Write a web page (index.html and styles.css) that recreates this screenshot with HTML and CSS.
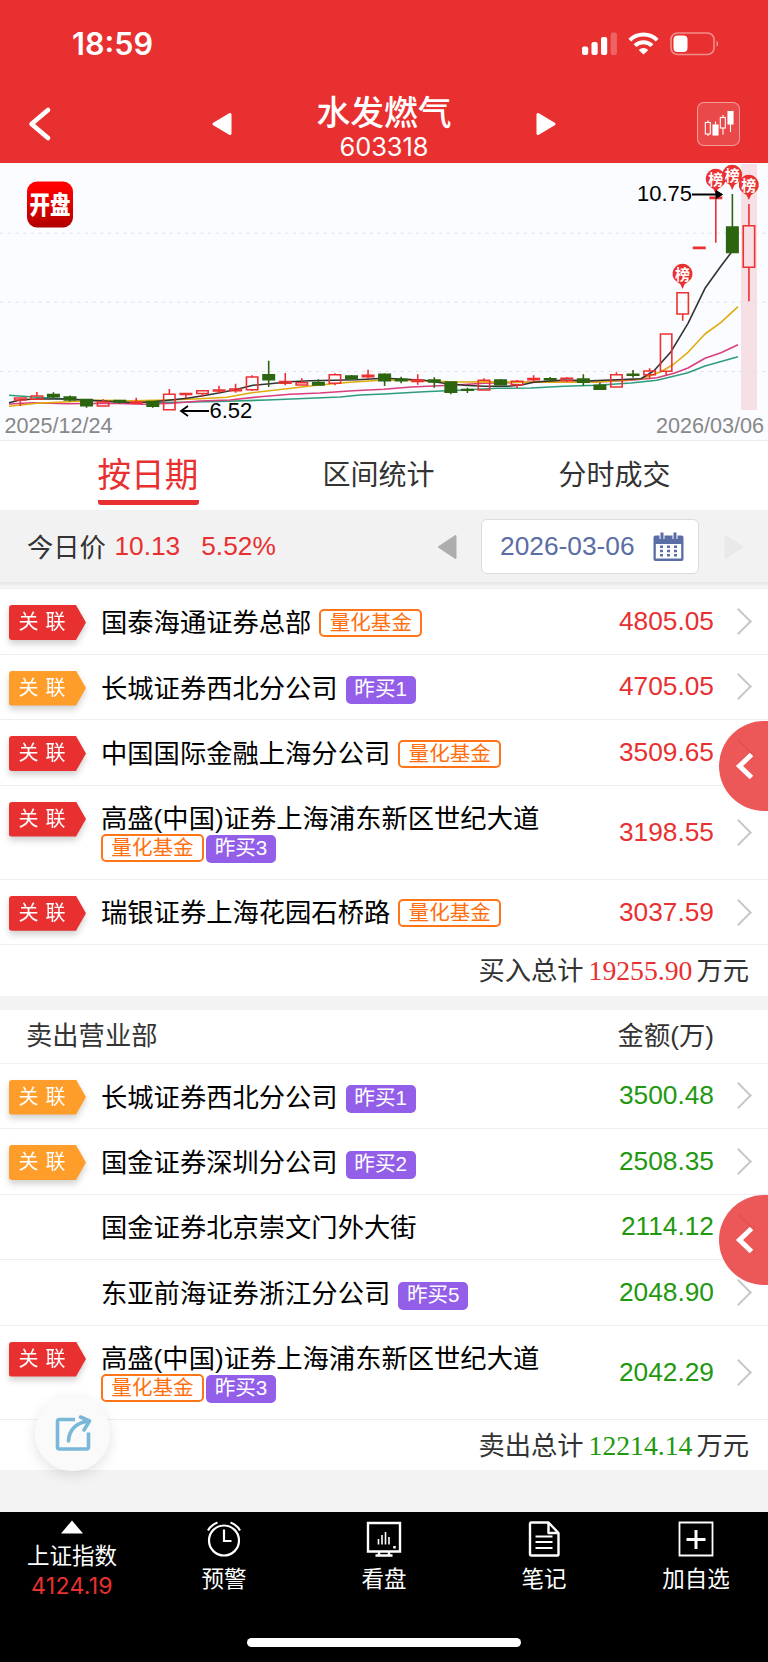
FILE: index.html
```
<!DOCTYPE html>
<html lang="zh-CN">
<head>
    <meta charset="UTF-8">
    <meta name="viewport" content="width=device-width, initial-scale=1.0">
    <title>水发燃气 603318</title>
    <link rel="stylesheet" href="styles.css">
</head>
<body>
    <div class="app">
        <header class="header">
            <div class="status-bar">
                <span class="time">18:59</span>
                <svg class="status-icons" width="138" height="24" viewBox="0 0 138 24" fill="#fff">
                    <rect x="0" y="14.5" width="6.2" height="8.5" rx="2"/>
                    <rect x="9.5" y="10" width="6.2" height="13" rx="2"/>
                    <rect x="19" y="5" width="6.2" height="18" rx="2"/>
                    <rect x="28.7" y="0.5" width="6.2" height="22.5" rx="2" opacity="0.25"/>
                    <g fill="none" stroke="#fff" stroke-width="4">
                        <path d="M47.8 8.2a19.5 19.5 0 0 1 27.4 0"/>
                        <path d="M53 13.6a12.2 12.2 0 0 1 17 0"/>
                    </g>
                    <path d="M61.5 22.5l-4.8-4.6a6.8 6.8 0 0 1 9.6 0z"/>
                    <rect x="89" y="1" width="43" height="21.5" rx="6.5" fill="none" stroke="#fff" stroke-width="1.6" opacity="0.45"/>
                    <rect x="91.5" y="3.5" width="14" height="16.5" rx="4"/>
                    <path d="M134.5 8.5a4 4 0 0 1 0 6.5z" opacity="0.5"/>
                </svg>
            </div>
            <div class="nav-bar">
                <svg class="nav-back" width="26" height="36" viewBox="0 0 26 36"><path d="M22 4L5.5 18 22 32" fill="none" stroke="#fff" stroke-width="4.6" stroke-linecap="round" stroke-linejoin="round"/></svg>
                <svg class="nav-prev" width="22" height="26" viewBox="0 0 22 26"><path d="M19 3.500v19L3 13z" fill="#fff" stroke="#fff" stroke-width="3" stroke-linejoin="round"/></svg>
                <div class="stock">
                    <h1 class="stock-name">水发燃气</h1>
                    <p class="stock-code">603318</p>
                </div>
                <svg class="nav-next" width="22" height="26" viewBox="0 0 22 26"><path d="M3 3.500v19l16-9.500z" fill="#fff" stroke="#fff" stroke-width="3" stroke-linejoin="round"/></svg>
                <div class="kline-button">
                    <svg width="30" height="28" viewBox="0 0 30 28" fill="none" stroke="#fff" stroke-width="1.1">
                        <path d="M4 10.5v2M4 24v2M11.5 11.5v3M19 5v2.5M19 18v6.5M26.5 14v8"/>
                        <rect x="1.3" y="12.5" width="5" height="11.5"/>
                        <rect x="9" y="15" width="5" height="10" fill="#fff"/>
                        <rect x="16.3" y="7.5" width="5" height="10.5"/>
                        <rect x="24" y="1.5" width="5" height="12.5" fill="#fff"/>
                    </svg>
                </div>
            </div>
        </header>

        <!-- K线图 -->
        <section class="chart">
            <svg id="kline" width="768" height="278" viewBox="0 163 768 278">
                <defs>
                    <linearGradient id="logoBg" x1="0" y1="0" x2="0" y2="1">
                        <stop offset="0.15" stop-color="#fd0000"/>
                        <stop offset="1" stop-color="#b00000"/>
                    </linearGradient>
                </defs>
                <rect x="741" y="164" width="16" height="246" fill="#f6dfe5"/>
                <g stroke="#e2e2e6" stroke-dasharray="3.5 4.2">
                    <path d="M0 233.2H768M0 302.2H768M0 371.5H768"/>
                </g>
                <rect x="27" y="181.5" width="46" height="46" rx="10" fill="url(#logoBg)"/>
                <text class="logo-text" transform="translate(50 214) scale(1 1.22)" text-anchor="middle">开盘</text>
                <g id="averages"></g>
                <g id="candles"></g>
                <g id="pins"></g>
                <g class="arrow">
                    <path d="M692 194.5h28M209 411h-28M188 406l-7 5 7 5"/>
                    <path class="arrow-head" d="M716 190.5l6.5 4-6.5 4z"/>
                </g>
                <text class="price-label" x="637" y="201">10.75</text>
                <text class="price-label" x="209.5" y="418.3">6.52</text>
                <text class="date-label" x="4.5" y="432.6">2025/12/24</text>
                <text class="date-label" x="764" y="432.6" text-anchor="end">2026/03/06</text>
            </svg>
        </section>

        <nav class="tabs">
            <a class="tab active">按日期</a>
            <a class="tab">区间统计</a>
            <a class="tab">分时成交</a>
        </nav>

        <section class="price-bar">
            <span class="price-title">今日价</span>
            <span class="price-value">10.13</span>
            <span class="price-change">5.52%</span>
            <svg class="date-prev" width="20" height="26" viewBox="0 0 20 26"><path d="M18.5 2v22L2 13z" fill="#adadad" stroke="#adadad" stroke-width="2" stroke-linejoin="round"/></svg>
            <div class="date-box">
                <span>2026-03-06</span>
                <svg width="31" height="30" viewBox="0 0 31 30">
                    <path d="M2.5 3.5h26a2 2 0 0 1 2 2V27a2 2 0 0 1-2 2h-26a2 2 0 0 1-2-2V5.500a2 2 0 0 1 2-2z" fill="#5b6da5"/>
                    <path d="M2.800 12h25.400v14.500H2.800z" fill="#fff"/>
                    <path d="M9 0v7M22 0v7" stroke="#fff" stroke-width="5"/>
                    <path d="M9 .5v6.500M22 .5v6.500" stroke="#5b6da5" stroke-width="3"/>
                    <path d="M8.500 13.500v11M15.500 13.500v11M22.500 13.500v11" stroke="#5b6da5" stroke-width="3" stroke-dasharray="2.600 1.600"/>
                </svg>
            </div>
            <svg class="date-next" width="20" height="26" viewBox="0 0 20 26"><path d="M1.500 2v22L18 13z" fill="#e9e9e9" stroke="#e9e9e9" stroke-width="2" stroke-linejoin="round"/></svg>
        </section>

        <!-- 买入 -->
        <section class="list buy">
            <div class="row">
                <div class="relation"><span class="relation-flag">关 联</span></div>
                <div class="dept"><span class="dept-name">国泰海通证券总部</span><span class="tag tag-fund">量化基金</span></div>
                <span class="amount">4805.05</span><i class="chevron"></i>
            </div>
            <div class="row">
                <div class="relation"><span class="relation-flag orange">关 联</span></div>
                <div class="dept"><span class="dept-name">长城证券西北分公司</span><span class="tag tag-day">昨买1</span></div>
                <span class="amount">4705.05</span><i class="chevron"></i>
            </div>
            <div class="row">
                <div class="relation"><span class="relation-flag">关 联</span></div>
                <div class="dept"><span class="dept-name">中国国际金融上海分公司</span><span class="tag tag-fund">量化基金</span></div>
                <span class="amount">3509.65</span><i class="chevron"></i>
            </div>
            <div class="row tall">
                <div class="relation"><span class="relation-flag">关 联</span></div>
                <div class="dept"><span class="dept-name">高盛(中国)证券上海浦东新区世纪大道</span><span class="tag tag-fund">量化基金</span><span class="tag tag-day">昨买3</span></div>
                <span class="amount">3198.55</span><i class="chevron"></i>
            </div>
            <div class="row">
                <div class="relation"><span class="relation-flag">关 联</span></div>
                <div class="dept"><span class="dept-name">瑞银证券上海花园石桥路</span><span class="tag tag-fund">量化基金</span></div>
                <span class="amount">3037.59</span><i class="chevron"></i>
            </div>
            <div class="total">买入总计<span class="total-value">19255.90</span>万元</div>
            <button class="side-button"><svg width="22" height="32" viewBox="0 0 22 32"><path d="M18.500 4.500L6.500 16l12 11.500" fill="none" stroke="#fff" stroke-width="5"/></svg></button>
        </section>

        <!-- 卖出 -->
        <section class="list sell">
            <div class="list-head"><span>卖出营业部</span><span>金额(万)</span></div>
            <div class="row">
                <div class="relation"><span class="relation-flag orange">关 联</span></div>
                <div class="dept"><span class="dept-name">长城证券西北分公司</span><span class="tag tag-day">昨买1</span></div>
                <span class="amount">3500.48</span><i class="chevron"></i>
            </div>
            <div class="row">
                <div class="relation"><span class="relation-flag orange">关 联</span></div>
                <div class="dept"><span class="dept-name">国金证券深圳分公司</span><span class="tag tag-day">昨买2</span></div>
                <span class="amount">2508.35</span><i class="chevron"></i>
            </div>
            <div class="row">
                <div class="relation"></div>
                <div class="dept"><span class="dept-name">国金证券北京崇文门外大街</span></div>
                <span class="amount">2114.12</span><i class="chevron"></i>
            </div>
            <div class="row">
                <div class="relation"></div>
                <div class="dept"><span class="dept-name">东亚前海证券浙江分公司</span><span class="tag tag-day">昨买5</span></div>
                <span class="amount">2048.90</span><i class="chevron"></i>
            </div>
            <div class="row tall">
                <div class="relation"><span class="relation-flag">关 联</span></div>
                <div class="dept"><span class="dept-name">高盛(中国)证券上海浦东新区世纪大道</span><span class="tag tag-fund">量化基金</span><span class="tag tag-day">昨买3</span></div>
                <span class="amount">2042.29</span><i class="chevron"></i>
            </div>
            <div class="total">卖出总计<span class="total-value">12214.14</span>万元</div>
            <button class="side-button"><svg width="22" height="32" viewBox="0 0 22 32"><path d="M18.500 4.500L6.500 16l12 11.500" fill="none" stroke="#fff" stroke-width="5"/></svg></button>
            <button class="share-button">
                <svg width="38" height="40" viewBox="0 0 38 40" fill="none" stroke="#7ab8d9" stroke-width="3.600" stroke-linecap="round" stroke-linejoin="round">
                    <path d="M21 5.500H5.500a2 2 0 0 0-2 2V33a2 2 0 0 0 2 2h27a2 2 0 0 0 2-2V18.500" stroke-linecap="butt"/>
                    <path d="M14.500 27C15 17 20 9.500 34 7M26.500 3L35.500 7l-5.500 9"/>
                </svg>
            </button>
        </section>

        <footer class="bottom-bar">
            <div class="bottom-items">
                <a class="bottom-item index">
                    <svg width="24" height="14" viewBox="0 0 24 14"><path d="M12 0.500l11 13H1z" fill="#fff"/></svg>
                    <span>上证指数</span>
                    <span class="index-value">4124.19</span>
                </a>
                <a class="bottom-item">
                    <svg width="36" height="36" viewBox="0 0 36 36" fill="none" stroke="#fff" stroke-width="2.200">
                        <circle cx="18" cy="19.500" r="15"/>
                        <path d="M18 8.500V20h7.500M2 9.500Q5 4 11.500 1.500M34 9.500Q31 4 24.500 1.500"/>
                    </svg>
                    <span>预警</span>
                </a>
                <a class="bottom-item">
                    <svg width="36" height="36" viewBox="0 0 36 36" fill="none" stroke="#fff" stroke-width="2.400">
                        <path d="M2 2h32v28.500H2zM9.500 34.500h17M13 31v3M23 31v3"/>
                        <path d="M12.500 18v5.500M16 14v9.500M19.500 11v12.500M23 16v7.500" stroke-width="1.600"/>
                        <path d="M28.500 25v2.500" stroke-width="2.500"/>
                    </svg>
                    <span>看盘</span>
                </a>
                <a class="bottom-item">
                    <svg width="36" height="36" viewBox="0 0 36 36" fill="none" stroke="#fff" stroke-width="2.400" stroke-linejoin="round">
                        <path d="M5 1.500h17.500L32.500 12v21.500a1 1 0 0 1-1 1h-26a1.500 1.500 0 0 1-1.500-1.500V3a1.500 1.500 0 0 1 1-1.500zM22.500 2v10h9.500"/>
                        <path d="M9.500 15.500h17M9.500 21h17M9.500 27h17" stroke-width="2"/>
                    </svg>
                    <span>笔记</span>
                </a>
                <a class="bottom-item">
                    <svg width="36" height="36" viewBox="0 0 36 36" fill="none" stroke="#fff">
                        <path d="M1.500 1.500h33v33h-33z" stroke-width="1.800"/>
                        <path d="M18 9v19M8.500 18.500h19" stroke-width="3"/>
                    </svg>
                    <span>加自选</span>
                </a>
            </div>
            <div class="home-indicator"></div>
        </footer>
    </div>
    <script src="chart.js"></script>
</body>
</html>
```
FILE: styles.css
```
* {
    margin: 0;
    padding: 0;
    box-sizing: border-box;
}

body {
    font-family: 'Liberation Sans', 'Noto Sans CJK SC', sans-serif;
    background: #f3f3f3;
    color: #333;
    font-size: 26.3px;
}

.app {
    width: 768px;
    height: 1662px;
    display: flex;
    flex-direction: column;
    overflow: hidden;
}

svg {
    display: block;
    flex-shrink: 0;
}

button {
    border: none;
}

/* 顶部 */
.header {
    height: 163px;
    background: #e83030;
    color: #fff;
    flex-shrink: 0;
}

.status-bar {
    height: 87px;
    padding: 0 48px 0 72px;
    display: flex;
    align-items: center;
    justify-content: space-between;
}

.time {
    font-family: 'Inter', sans-serif;
    font-weight: 600;
    font-size: 30.6px;
}

.nav-bar {
    height: 76px;
    padding: 0 28px 2px 26px;
    display: flex;
    align-items: center;
}

.nav-prev {
    margin-left: 159px;
}

.stock {
    width: 302px;
    padding-top: 6px;
    text-align: center;
}

.stock-name {
    font-size: 33.8px;
    font-weight: 500;
    line-height: 38px;
}

.stock-code {
    font-family: 'Inter', sans-serif;
    font-size: 25.4px;
    line-height: 29px;
}

.kline-button {
    width: 43px;
    height: 44px;
    margin-left: auto;
    border: 1px solid rgba(255, 255, 255, 0.45);
    border-radius: 7px;
    background: rgba(255, 255, 255, 0.12);
    display: flex;
    align-items: center;
    justify-content: center;
}

/* K线图 */
.chart {
    height: 278px;
    background: #fbfcff;
    border-bottom: 1px solid #ededf0;
    flex-shrink: 0;
    overflow: hidden;
}

.logo-text {
    fill: #fff;
    font-size: 20.5px;
    font-weight: 900;
}

.price-label {
    font-size: 22px;
    fill: #000;
}

.date-label {
    font-size: 21.6px;
    fill: #888;
}

.arrow {
    fill: none;
    stroke: #000;
    stroke-width: 1.8;
}

.arrow-head {
    fill: #000;
    stroke-width: 1;
}

.average {
    fill: none;
    stroke-width: 1.6;
    stroke-linejoin: round;
}

.candle {
    stroke-width: 1.6;
}

.candle.up {
    stroke: #ee3030;
    fill: none;
}

.candle.down {
    stroke: #2d6410;
    fill: #2d6410;
}

.pin {
    fill: #ea3030;
}

.pin-text {
    fill: #fff;
    font-size: 15px;
    font-weight: 700;
    text-anchor: middle;
}

/* 标签页 */
.tabs {
    height: 69px;
    background: #fff;
    display: flex;
    align-items: flex-start;
    padding-left: 97.5px;
    flex-shrink: 0;
}

.tab {
    width: 112px;
    height: 64px;
    line-height: 70px;
    font-size: 28px;
    white-space: nowrap;
    margin-left: 124px;
}

.tab.active {
    width: 101px;
    margin-left: 0;
    color: #e83030;
    font-size: 33.6px;
    border-bottom: 5px solid #e83030;
    border-radius: 3px;
}

/* 今日价 */
.price-bar {
    height: 78px;
    padding: 0 24px 5px 27px;
    background: linear-gradient(#f2f2f2 0, #f2f2f2 72px, #e6e6e6 72px, #f8f8f8 78px);
    display: flex;
    align-items: center;
    flex-shrink: 0;
}

.price-title {
    padding-bottom: 3px;
}

.price-value {
    margin-left: 8.5px;
    color: #e83030;
}

.price-change {
    margin-left: 21px;
    color: #e83030;
}

.date-prev {
    margin-left: auto;
}

.date-box {
    width: 218px;
    height: 55px;
    margin: 0 25px 0 24px;
    padding: 0 14px 0 18px;
    border: 1.5px solid #dcdcdc;
    border-radius: 6px;
    background: #fff;
    color: #5b6da5;
    display: flex;
    align-items: center;
    justify-content: space-between;
}

/* 营业部列表 */
.list {
    position: relative;
    background: #fff;
    flex-shrink: 0;
}

.buy {
    height: 408px;
    border-top: 1px solid #eee;
}

.sell {
    height: 460px;
    margin-top: 14px;
}

.list-head {
    height: 53.5px;
    padding: 0 54px 6px 26px;
    border-bottom: 1px solid #f0f0f0;
    display: flex;
    align-items: center;
    justify-content: space-between;
}

.row {
    height: 65.5px;
    padding: 0 16px 0 9px;
    border-bottom: 1px solid #efefef;
    display: flex;
    align-items: center;
}

.row.tall {
    height: 94.3px;
}

.relation {
    width: 92px;
    align-self: flex-start;
    padding-top: 16px;
    filter: drop-shadow(0 4px 3px rgba(0, 0, 0, 0.18));
}

.relation-flag {
    display: block;
    width: 77px;
    height: 35px;
    padding-left: 9.5px;
    border-radius: 3px 0 0 3px;
    background: #e83030;
    color: #fff;
    font-size: 20px;
    line-height: 34px;
    word-spacing: 1.5px;
    clip-path: polygon(0 0, 67px 0, 100% 50%, 67px 100%, 0 100%);
}

.relation-flag.orange {
    background: #ff9d2b;
}

.dept {
    width: 460px;
    align-self: flex-start;
    padding-top: 18.5px;
    display: flex;
    flex-wrap: wrap;
    align-items: center;
    color: #000;
}

.dept-name {
    line-height: 30px;
    margin-right: 8px;
    white-space: nowrap;
}

.tall .dept-name {
    width: 100%;
    height: 28.5px;
}

.tag {
    height: 28px;
    line-height: 25px;
    border-radius: 5px;
    font-size: 20.6px;
    text-align: center;
}

.tag-fund {
    width: 103px;
    margin-right: 2px;
    border: 2px solid #ff7518;
    line-height: 23px;
    color: #ff6f0f;
}

.tag-day {
    width: 70px;
    margin-top: 3px;
    background: #935ee8;
    color: #fff;
}

.tall .tag-day {
    margin-top: 2px;
}

.amount {
    margin-left: auto;
    color: #e83030;
}

.sell .amount,
.sell .total-value {
    color: #22980f;
}

.chevron {
    width: 19px;
    height: 19px;
    margin-left: 15px;
    margin-right: 4px;
    border-top: 2px solid #c8c8c8;
    border-right: 2px solid #c8c8c8;
    transform: rotate(45deg);
}

.total {
    height: 50px;
    padding-right: 19px;
    line-height: 51px;
    text-align: right;
}

.total-value {
    margin: 0 4px 0 5px;
    font-family: 'Liberation Serif', serif;
    font-size: 27.7px;
    color: #e83030;
}

/* 悬浮按钮 */
.side-button {
    position: absolute;
    right: 0;
    top: 132px;
    width: 49px;
    height: 90px;
    padding-left: 14px;
    border-radius: 45px 0 0 45px;
    background: rgba(233, 58, 58, 0.85);
}

.sell .side-button {
    top: 185px;
}

.share-button {
    position: absolute;
    left: 35px;
    top: 386px;
    width: 75px;
    height: 75px;
    border-radius: 50%;
    background: rgba(250, 250, 250, 0.96);
    box-shadow: 0 4px 14px rgba(0, 0, 0, 0.12);
    display: flex;
    align-items: center;
    justify-content: center;
}

/* 底部 */
.bottom-bar {
    height: 150px;
    margin-top: auto;
    background: #000;
    color: #fff;
    display: flex;
    flex-direction: column;
    align-items: center;
    flex-shrink: 0;
}

.bottom-items {
    width: 100%;
    height: 126px;
    display: flex;
}

.bottom-item {
    width: 160px;
    padding-top: 9px;
    display: flex;
    flex-direction: column;
    align-items: center;
    font-size: 22.5px;
    line-height: 28px;
    gap: 9px;
}

.bottom-item:first-child,
.bottom-item:last-child {
    width: 144px;
}

.bottom-item.index {
    padding-top: 8px;
    gap: 9px;
}

.index-value {
    margin-top: -8px;
    font-family: 'Inter', sans-serif;
    font-size: 23px;
    letter-spacing: 0.3px;
    color: #e83030;
}

.home-indicator {
    width: 274px;
    height: 9px;
    border-radius: 5px;
    background: #fff;
}
```
FILE: chart.js
```
const START_X = 20.3;
const STEP = 16.56;

// [方向, 最高, 最低, 实体上沿, 实体下沿]
const candles = [
    ['up', 398, 406, 398, 400],
    ['up', 392, 399.3, 396, 399.3],
    ['down', 392.3, 398.7, 394.5, 396.8],
    ['down', 395.5, 401.5, 397, 400],
    ['down', 399, 407.7, 399.5, 405.8],
    ['up', 399.3, 406.3, 402, 406],
    ['down', 400, 403.7, 400.5, 402],
    ['up', 397.7, 403.7, 402, 403.3],
    ['down', 401, 407.7, 401.5, 406.2],
    ['up', 389, 410, 394.3, 409.7],
    ['up', 393, 398, 393.5, 394.5],
    ['up', 390.3, 397, 390.8, 393.5],
    ['up', 385.7, 393.3, 390, 391],
    ['up', 383.7, 392.7, 389, 390.8],
    ['up', 375.3, 391, 377, 389.7],
    ['down', 360.7, 387, 374.7, 379.7],
    ['up', 373, 385.3, 381.5, 383.2],
    ['up', 378.3, 385.3, 382.7, 385],
    ['down', 379.3, 385.7, 382.5, 385],
    ['up', 373.3, 385.3, 374.7, 383.3],
    ['down', 375, 379.5, 376, 378.8],
    ['up', 369.7, 378.7, 375.3, 376.8],
    ['down', 373.3, 386, 374.3, 380.7],
    ['down', 376.7, 383.3, 379.3, 380.7],
    ['up', 374.3, 384.7, 380, 381.5],
    ['down', 377.3, 387.7, 380, 382],
    ['down', 381.3, 394.3, 382, 392.3],
    ['down', 387.7, 393, 389.5, 390.2],
    ['up', 378.3, 390.3, 380.3, 390],
    ['down', 379, 385.5, 380, 384.7],
    ['up', 380, 388.3, 381.3, 384.7],
    ['up', 375.3, 381.7, 378.5, 379.7],
    ['down', 377, 381.3, 378.8, 379.8],
    ['up', 377, 382, 378.2, 380.5],
    ['down', 374.3, 385.7, 379, 382.3],
    ['down', 382.7, 390, 385.3, 389.3],
    ['up', 372.3, 387.3, 374.7, 387],
    ['down', 370, 377.7, 374.3, 375.3],
    ['up', 368.3, 379, 371, 374.7],
    ['up', 333.7, 375, 334, 371.3],
    ['up', 292.7, 320.7, 292.7, 314],
    ['up', 247, 248.7, 247.2, 248.5],
    ['up', 197, 242.7, 197.3, 198.5],
    ['down', 194, 253, 227, 252.5],
    ['up', 204, 301.3, 225.7, 267.3]
];

const averages = [
    ['#2f9d7c', '9,395.3 33,397 67,399 97,401 133,402.3 183,402.3 227,401.3 267,400 310,398.3 340,397 360,395 384,394 424,391.7 464,390 497,388.3 531,388 564,386.3 597,385.3 631,383 657,380.3 688,372.7 705,366 738,356.7'],
    ['#d93f7e', '9,404 33,402.7 67,403.7 110,403.3 143,404.3 173,403.3 200,401 230,400 260,396.7 290,394.3 320,393 353,390.7 384,389.3 411,387 451,385.3 484,383.3 524,382.3 564,380.7 597,382 631,380.3 657,377.7 674,373.3 688,368 705,358.3 721,352.7 738,344.7'],
    ['#dfac0c', '9,406.3 37,403.3 53,402.5 100,400.3 133,400.7 167,400 200,398.7 227,397.3 250,393 287,388.7 317,385.3 350,382.3 384,380 424,380.7 457,382 491,381.7 517,382.3 567,382.3 597,382 641,379 661,371.7 674,364 688,352.3 705,334 721,322.3 738,306.7'],
    ['#333', '9,402.7 21,399.7 37,399 67,399 100,400.7 133,402.7 153,401.7 173,399.7 187,398.3 203,395.7 220,392.7 237,389.3 253,385.3 270,383.7 290,381.7 310,380.7 357,379.7 384,378.3 401,379 424,380.3 444,383.3 464,385.3 484,386.3 507,386.3 521,385 534,382.3 564,380 591,380.7 617,379.7 641,378.7 654,370.7 671,351.7 688,323.3 705,288.3 721,266 732,251.5']
];

const pins = [[682.5, 274], [715.7, 179], [732.2, 175], [748.8, 185]];

document.getElementById('averages').innerHTML = averages.map(([color, points]) =>
    `<polyline class="average" stroke="${color}" points="${points}"/>`
).join('');

document.getElementById('candles').innerHTML = candles.map(([type, high, low, top, bottom], i) => {
    const x = START_X + STEP * i;
    return `<path class="candle ${type}" d="M${x} ${high}V${top}M${x} ${bottom}V${low}M${x - 5.7} ${top}h11.4V${bottom}h-11.4z"/>`;
}).join('');

document.getElementById('pins').innerHTML = pins.map(([x, y]) => `
    <path class="pin" d="M${x - 8.5} ${y + 5}a10 10 0 1 1 17 0q-3 3.500-6.200 5L${x} ${y + 15}l-2.300-5q-3.200-1.500-6.200-5z"/>
    <text class="pin-text" x="${x}" y="${y + 5.5}">榜</text>`
).join('');
```
